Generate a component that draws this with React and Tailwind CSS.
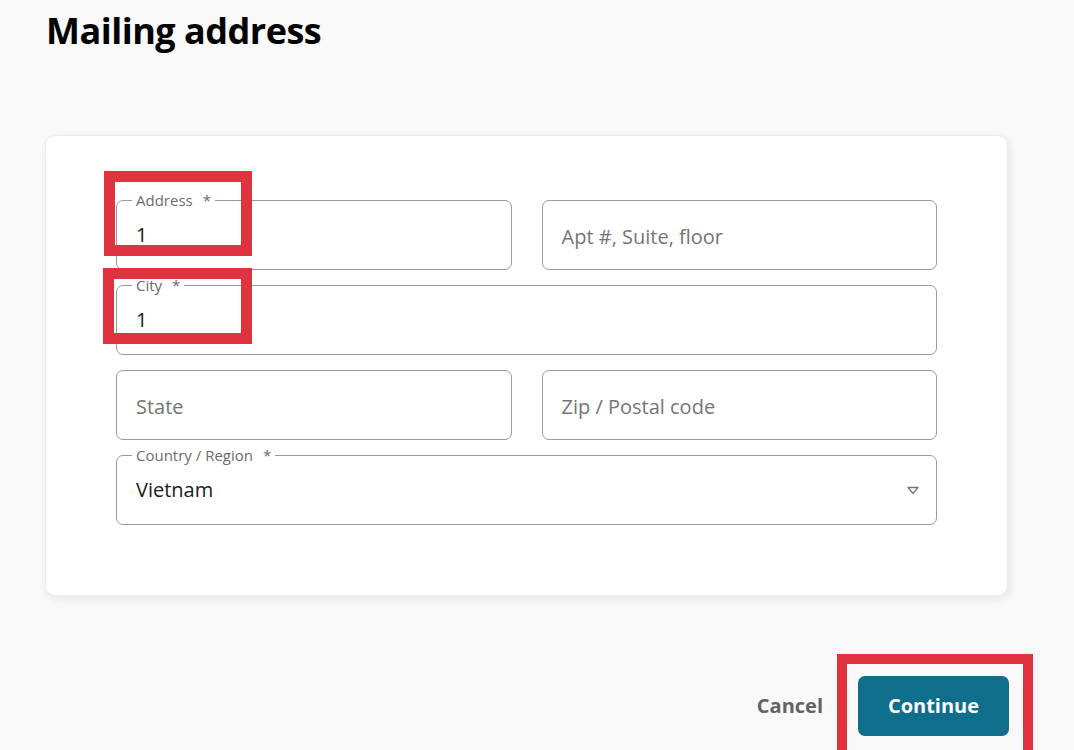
import React from "react";

function Field({ label, value, placeholder, select }) {
  return (
    <div className="relative h-[70px] rounded-[7px] border border-[#9a9a9a] bg-white flex items-center pl-[19px] pr-[19px]">
      {label && (
        <span className="absolute left-[15px] top-[-11px] bg-white px-[4px] text-[15px] leading-[20px] text-[#6b6b6b]">
          {label}
          <span className="ml-[10px]">*</span>
        </span>
      )}
      {value ? (
        <span className="text-[20px] text-[#1a1a1a]">{value}</span>
      ) : (
        <span className="pt-[4px] text-[20px] text-[#757575]">{placeholder}</span>
      )}
      {select && (
        <svg className="ml-auto mr-[-2px]" width="12" height="9" viewBox="0 0 12 9">
          <polygon points="1,1.5 11,1.5 6,7.5" fill="none" stroke="#777" strokeWidth="1.3" strokeLinejoin="round" />
        </svg>
      )}
    </div>
  );
}

export default function App() {
  return (
    <div
      className="relative w-[1074px] h-[750px] overflow-hidden bg-[#f9f9f9]"
      style={{ fontFamily: '"Open Sans", "Noto Sans", sans-serif' }}
    >
      <h1 className="pl-[46px] pt-[11px] text-[36px] leading-[40px] font-bold text-black tracking-[-0.5px]">
        Mailing address
      </h1>

      <div className="ml-[45px] mt-[84px] w-[963px] h-[461px] rounded-[10px] bg-white border border-[#ececec] shadow-[2px_3px_8px_rgba(0,0,0,0.08)] px-[70px] pt-[64px]">
        <div className="grid grid-cols-2 gap-x-[30px] gap-y-[15px]">
          <Field label="Address" value="1" />
          <Field placeholder="Apt #, Suite, floor" />
          <div className="col-span-2">
            <Field label="City" value="1" />
          </div>
          <Field placeholder="State" />
          <Field placeholder="Zip / Postal code" />
          <div className="col-span-2">
            <Field label="Country / Region" value="Vietnam" select />
          </div>
        </div>
      </div>

      <div className="ml-[45px] w-[964px] mt-[80px] flex items-center justify-end gap-[35px]">
        <span className="text-[20px] font-bold text-[#636363]">Cancel</span>
        <button className="w-[151px] h-[60px] rounded-[7px] bg-[#0f6e8b] text-white text-[20px] font-bold">
          Continue
        </button>
      </div>

      {/* annotation overlays */}
      <div className="absolute left-[104px] top-[171px] w-[148px] h-[85px] border-[11px] border-[#e1323f]" />
      <div className="absolute left-[103px] top-[268px] w-[149px] h-[76px] border-[11px] border-[#e1323f]" />
      <div className="absolute left-[837px] top-[654px] w-[196px] h-[110px] border-[10px] border-[#e1323f]" />
    </div>
  );
}
